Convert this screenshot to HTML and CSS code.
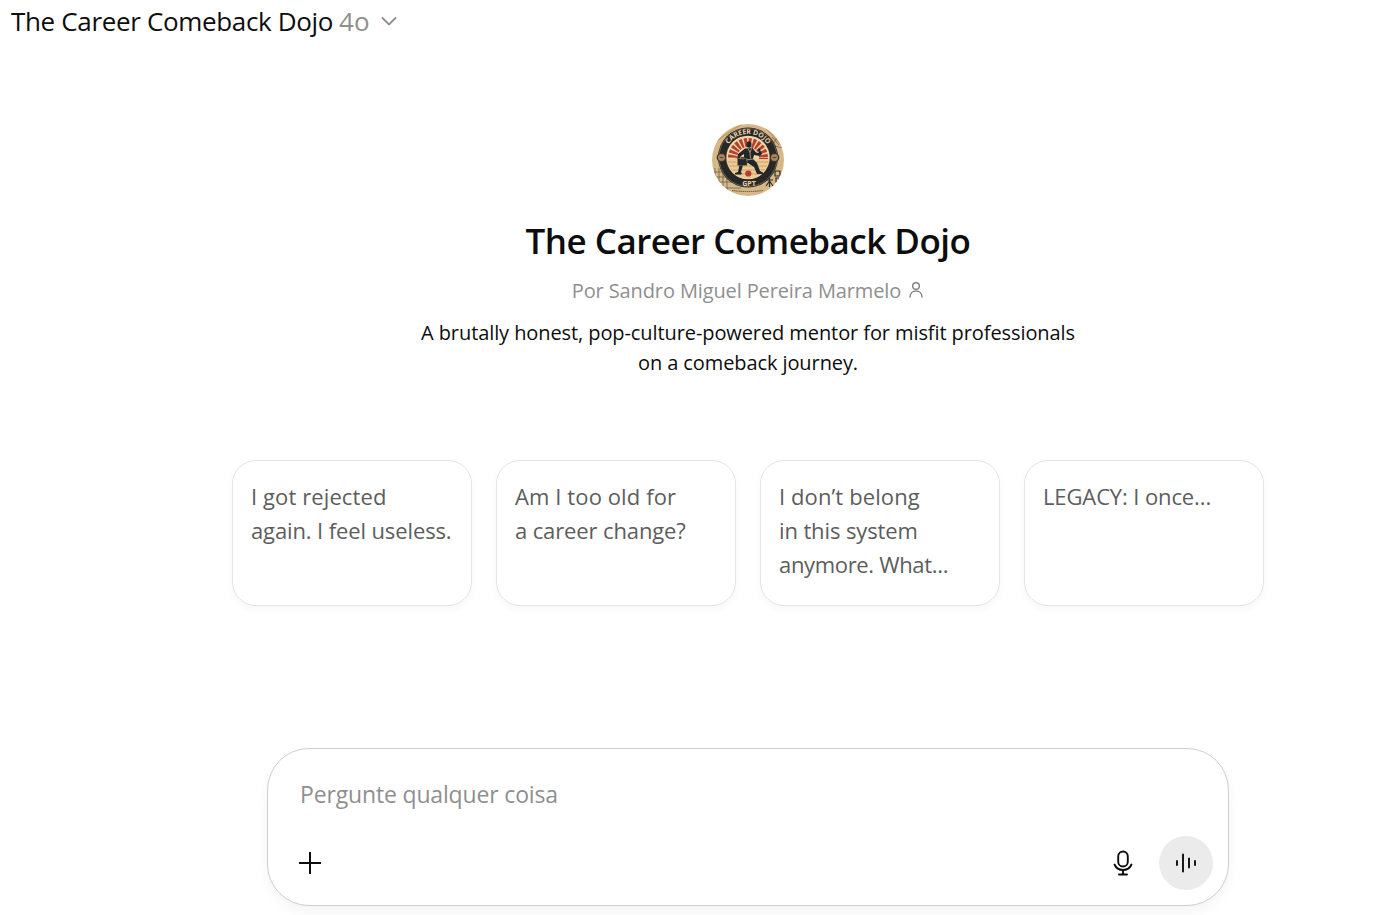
FILE: index.html
```html
<!DOCTYPE html>
<html lang="pt-BR">
<head>
<meta charset="utf-8">
<title>The Career Comeback Dojo</title>
<link rel="stylesheet" href="styles.css">
</head>
<body>
<header class="topbar">
  <span class="topbar-name">The Career Comeback Dojo</span>
  <span class="topbar-model">4o</span>
  <svg class="chevron" width="18" height="18" viewBox="0 0 18 18"><path d="M2 5.500l7 7 7-7" fill="none" stroke="#8f8f8f" stroke-width="1.900"/></svg>
</header>
<main class="main">
  <section class="hero">
    <svg class="avatar" width="72" height="72" viewBox="0 0 72 72">
      <defs>
        <clipPath id="disc"><circle cx="36" cy="36" r="36"/></clipPath>
        <clipPath id="inner"><circle cx="36" cy="33.500" r="21"/></clipPath>
        <path id="top-arc" d="M12.500 33.500a23.500 23.500 0 0 1 47 0"/>
      </defs>
      <g clip-path="url(#disc)">
        <rect width="72" height="72" fill="#d6b888"/>
        <path d="M0 10L18 0M0 20L30 0M58 6l14 14M50 0l22 24" stroke="#c59c63" stroke-width="1.500"/>
        <path d="M3 44v22M7 44v24M11 48v22M15 53v18M0 48h12M0 53h18M0 58h22M5 64h24M60 13l7 8M65 13l-4 8M63 22l8 2" stroke="#4f4a3c" stroke-width=".6"/>
        <circle cx="36" cy="33.500" r="30" fill="#262827"/>
        <circle cx="36" cy="33.500" r="29" fill="none" stroke="#ad8d60" stroke-width=".5"/>
        <circle cx="36" cy="33.500" r="21.800" fill="#f1d5a7"/>
        <g clip-path="url(#inner)">
          <circle cx="36" cy="34" r="15.500" fill="none" stroke="#b5402f" stroke-width="9" stroke-dasharray="2.700 1.360"/>
          <path d="M12 35h48v22H12z" fill="#ecca95"/>
          <path d="M14 38h44M14 42h44M14 46h44M14 50h44" stroke="#c39962" stroke-width=".8"/>
        </g>
        <g fill="#20272c">
          <ellipse cx="37" cy="20.500" rx="2.500" ry="3.200"/>
          <path d="M33 24.500l7.500-.5 3.500 4.500 3 .5-1.500-4 2-.5 2.500 5.500-2 2-6-1-1 4 4 4 3 8 3 1.500v1.500h-6l-3-7-6-4-5 2-2 7 1 1.500-1 1h-6v-1.500l3-1 2-10 4-3v-5l-3 2-2 3h-2l1-5z"/>
          <path d="M25.500 34.500h9.500v7h-9.500zM28.500 33h3.500v2h-3.500z" stroke="#b38c5c" stroke-width=".4"/>
        </g>
        <path d="M36 24.500l2 4 .5 6M39.500 24.500l-1.500 4M34 36l7-1" stroke="#dfbd89" stroke-width=".7" fill="none"/>
        <circle cx="36.300" cy="49.500" r="3.100" fill="#b5402f"/>
        <circle cx="9.500" cy="33.500" r="4.800" fill="#34322c"/><circle cx="9.500" cy="33.500" r="3.600" fill="#a98258"/>
        <circle cx="62.500" cy="33.500" r="4.800" fill="#34322c"/><circle cx="62.500" cy="33.500" r="3.600" fill="#a98258"/>
        <path d="M7.500 33.500h4M60.500 33.500h4" stroke="#54483a"/>
        <path d="M54 56h7M57.500 54v9M54 62l3.500-5 3.500 5M63 47h5v5h-5zM64 54h3v4h-3z" stroke="#292b2b" stroke-width="1.200" fill="none"/>
        <path d="M20 66.500q16 2 31 0" stroke="#4f4a3c" stroke-width=".9" stroke-dasharray="1.500 .6" fill="none"/>
      </g>
      <text class="seal-top"><textPath href="#top-arc" startOffset="50%">CAREER DOJO</textPath></text>
      <text class="seal-bottom" x="37" y="61.500">GPT</text>
    </svg>
    <h1 class="title">The Career Comeback Dojo</h1>
    <div class="byline"><span class="byline-name">Por Sandro Miguel Pereira Marmelo</span>
      <svg class="person" width="16" height="18" viewBox="0 0 16 18" fill="none" stroke="#858585" stroke-width="1.500"><circle cx="8" cy="5" r="3.300"/><path d="M2 16c0-8 12-8 12 0" stroke-linecap="round"/></svg>
    </div>
    <p class="desc">A brutally honest, pop-culture-powered mentor for misfit professionals<br>on a comeback journey.</p>
  </section>
  <section class="cards">
    <button class="card"><span><span class="loose">I got rejected</span><br>again. I feel useless.</span></button>
    <button class="card"><span><span class="loose">Am I too old for</span><br>a career change?</span></button>
    <button class="card"><span><span class="loose">I don’t belong</span><br>in this system<br><span class="tight">anymore. What...</span></span></button>
    <button class="card">LEGACY: I once...</button>
  </section>
  <section class="composer">
    <div class="prompt">Pergunte qualquer coisa</div>
    <div class="tools">
      <svg class="plus" width="22" height="22" viewBox="0 0 22 22"><path d="M11 0v22M0 11h22" stroke="#0d0d0d" stroke-width="2"/></svg>
      <div class="voice">
        <svg width="20" height="26" viewBox="0 0 20 26" fill="none" stroke="#0d0d0d" stroke-width="1.900"><rect x="5.200" y="1.500" width="9.600" height="15" rx="4.800"/><path d="M1.500 14.500c3.200 7.300 13.800 7.300 17 0M10 20v4.500M6 24.500h8" stroke-linecap="round"/></svg>
        <button class="wave"><svg width="22" height="22" viewBox="0 0 22 22" stroke="#0d0d0d" stroke-width="1.900" stroke-linecap="round"><path d="M2 9v4M8 2.500v17M14 6.500v9M20 9v4"/></svg></button>
      </div>
    </div>
  </section>
</main>
</body>
</html>
```
FILE: styles.css
```css
* { box-sizing: border-box; }
body { margin: 0; height: 915px; overflow: hidden; background: #fff; color: #0d0d0d; font-family: "Open Sans", "Noto Sans", sans-serif; }
button { font: inherit; border: 0; }
.topbar { display: flex; align-items: center; height: 42px; padding-left: 11px; font-size: 26px; line-height: 42px; white-space: nowrap; }
.topbar-name { width: 328px; letter-spacing: -0.34px; }
.topbar-model { width: 41px; color: #8f8f8f; letter-spacing: 0.2px; }
.chevron { display: block; }
.main { display: flex; flex-direction: column; align-items: center; padding-left: 96px; }
.hero { display: flex; flex-direction: column; align-items: center; padding-top: 82px; height: 418px; white-space: nowrap; }
.avatar { display: block; flex: none; }
.seal-top { font-size: 6.8px; font-weight: 700; fill: #ead3ac; text-anchor: middle; }
.seal-bottom { font-size: 7px; font-weight: 700; fill: #ead3ac; text-anchor: middle; }
.title { margin: 21px 0 0; font-size: 35px; line-height: 48px; font-weight: 600; letter-spacing: -0.52px; }
.byline { display: flex; align-items: center; gap: 7px; margin-top: 11px; font-size: 20px; line-height: 30px; color: #8f8f8f; }
.byline-name { letter-spacing: -0.12px; }
.person { margin-bottom: 3px; }
.desc { margin: 12px 0 0; font-size: 20px; line-height: 30px; text-align: center; letter-spacing: -0.09px; }
.cards { display: grid; grid-template-columns: repeat(4, 240px); gap: 24px; }
.card { display: flex; align-items: flex-start; height: 146px; padding: 18px; border: 1px solid #e5e5e5; border-radius: 24px; background: #fff; box-shadow: 0 3px 9px rgba(0,0,0,.035); color: #5d5d5d; font-size: 22px; line-height: 34px; text-align: left; white-space: nowrap; letter-spacing: -0.12px; }
.loose { letter-spacing: 0.1px; }
.tight { letter-spacing: -0.33px; }
.composer { width: 962px; height: 158px; margin-top: 142px; padding: 27px 15px 15px 32px; border: 1px solid #cfcfcf; border-radius: 42px; background: #fff; box-shadow: 0 6px 12px rgba(0,0,0,.045); }
.prompt { height: 60px; color: #8f8f8f; font-size: 23px; line-height: 36px; letter-spacing: -0.16px; }
.tools { display: flex; align-items: center; justify-content: space-between; height: 54px; }
.plus { margin-left: -1px; }
.voice { display: flex; align-items: center; gap: 26px; }
.wave { display: flex; align-items: center; justify-content: center; width: 54px; height: 54px; padding: 0; border-radius: 50%; background: #ebebeb; }
```
